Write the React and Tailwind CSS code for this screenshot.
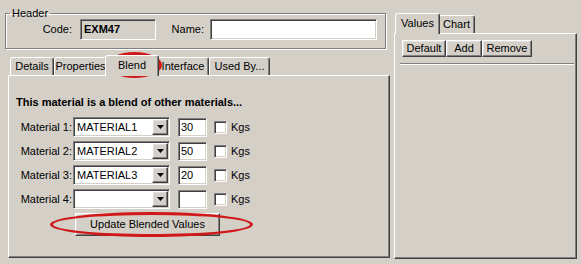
import React from 'react'

const raised =
  'border border-t-white border-l-white border-r-[#404040] border-b-[#404040] shadow-[inset_-1px_-1px_0_#808080,inset_1px_1px_0_#dfdfdf]'
const sunken =
  'border border-t-[#808080] border-l-[#808080] border-r-white border-b-white shadow-[inset_1px_1px_0_#404040,inset_-1px_-1px_0_#d4d0c8]'

function Tab({ label, width, selected }) {
  return (
    <div
      className={`${width} flex-none ${
        selected ? 'relative z-10 -mx-[2px] h-[21px] -mb-[1px] pb-[1px]' : 'h-[18px]'
      } bg-[#d4d0c8] border-t border-l border-t-white border-l-white border-r border-r-[#404040] rounded-t-[3px] shadow-[inset_-1px_0_0_#808080] flex items-center justify-center`}
    >
      <span className="leading-none">{label}</span>
    </div>
  )
}

function Combo({ value }) {
  return (
    <div className={`w-[97px] h-[20px] bg-white flex items-center ${sunken} pl-[3px] pr-[1px]`}>
      <span className="flex-1 leading-none">{value}</span>
      <div className={`w-[16px] h-[16px] bg-[#d4d0c8] ${raised} flex items-center justify-center`}>
        <svg width="7" height="4" viewBox="0 0 7 4">
          <path d="M0 0h7L3.5 4z" fill="#000" />
        </svg>
      </div>
    </div>
  )
}

function MaterialRow({ n, material, qty }) {
  return (
    <div className="flex items-center h-[20px]">
      <div className="w-[57px] text-right pr-[1px] leading-none">Material {n}:</div>
      <Combo value={material} />
      <div className={`ml-[8px] w-[29px] h-[19px] bg-white ${sunken} pl-[2px] flex items-center leading-none`}>
        {qty}
      </div>
      <div className={`ml-[7px] w-[13px] h-[13px] bg-white ${sunken}`} />
      <span className="ml-[4px] leading-none">Kgs</span>
    </div>
  )
}

export default function App() {
  const rows = [
    { n: 1, material: 'MATERIAL1', qty: '30' },
    { n: 2, material: 'MATERIAL2', qty: '50' },
    { n: 3, material: 'MATERIAL3', qty: '20' },
    { n: 4, material: '', qty: '' },
  ]

  return (
    <div className="relative w-[581px] h-[264px] bg-[#d4d0c8] text-black text-[11px] font-['Liberation_Sans',Arial,sans-serif] flex overflow-hidden">
      {/* left side */}
      <div className="w-[391px] flex-none pl-[5px]">
        <fieldset className="mt-[7px] w-[381px] h-[42px] border border-[#808080] shadow-[inset_1px_1px_0_#fff,1px_1px_0_#fff]">
          <legend className="ml-[4px] px-[2px] leading-[12px]">Header</legend>
          <div className="flex items-center h-[21px]">
            <div className="w-[66px] text-right leading-none">Code:</div>
            <div className={`ml-[8px] w-[76px] h-[21px] ${sunken} pl-[3px] flex items-center font-bold leading-none`}>
              EXM47
            </div>
            <div className="w-[48px] text-right leading-none">Name:</div>
            <div className={`ml-[6px] w-[167px] h-[21px] bg-white ${sunken}`} />
          </div>
        </fieldset>

        <div className="ml-[3px] mt-[5px]">
          <div className="flex items-end h-[21px] pl-[2px]">
            <Tab label="Details" width="w-[44px]" />
            <Tab label="Properties" width="w-[53px]" />
            <Tab label="Blend" width="w-[54px]" selected />
            <Tab label="Interface" width="w-[52px]" />
            <Tab label="Used By..." width="w-[61px]" />
          </div>
          <div className="w-[382px] h-[183px] border border-t-white border-l-white border-r-[#404040] border-b-[#404040] shadow-[inset_-1px_-1px_0_#808080] pl-[7px] pt-[20px]">
            <div className="font-bold leading-[13px]">This material is a blend of other materials...</div>
            <div className="mt-[8px] flex flex-col gap-[4px]">
              {rows.map((r) => (
                <MaterialRow key={r.n} {...r} />
              ))}
            </div>
            <button
              className={`ml-[59px] mt-[4px] w-[145px] h-[23px] bg-[#d4d0c8] ${raised} flex items-center justify-center leading-none`}
            >
              Update Blended Values
            </button>
          </div>
        </div>
      </div>

      {/* right side */}
      <div className="ml-[3px] mt-[13px]">
        <div className="flex items-end h-[20px] pl-[3px]">
          <Tab label="Values" width="w-[45px]" selected />
          <Tab label="Chart" width="w-[37px]" />
        </div>
        <div className="w-[183px] h-[226px] border border-t-white border-l-white border-r-[#404040] border-b-[#404040] shadow-[inset_-1px_-1px_0_#808080] pt-[6px]">
          <div className="flex pl-[7px]">
            <button className={`w-[44px] h-[17px] bg-[#d4d0c8] ${raised} leading-none`}>Default</button>
            <button className={`w-[36px] h-[17px] bg-[#d4d0c8] ${raised} leading-none`}>Add</button>
            <button className={`w-[50px] h-[17px] bg-[#d4d0c8] ${raised} leading-none`}>Remove</button>
          </div>
          <div className="mt-[6px] ml-[5px] mr-[2px] h-[2px] border-t border-t-[#808080] border-b border-b-white" />
        </div>
      </div>

      {/* red annotation rings */}
      <div className="absolute left-[107px] top-[52px] w-[55px] h-[26px] rounded-[50%] border-[3px] border-[#d01818]" />
      <div className="absolute left-[50px] top-[212px] w-[203px] h-[25px] rounded-[50%] border-[3px] border-[#d01818]" />
    </div>
  )
}
